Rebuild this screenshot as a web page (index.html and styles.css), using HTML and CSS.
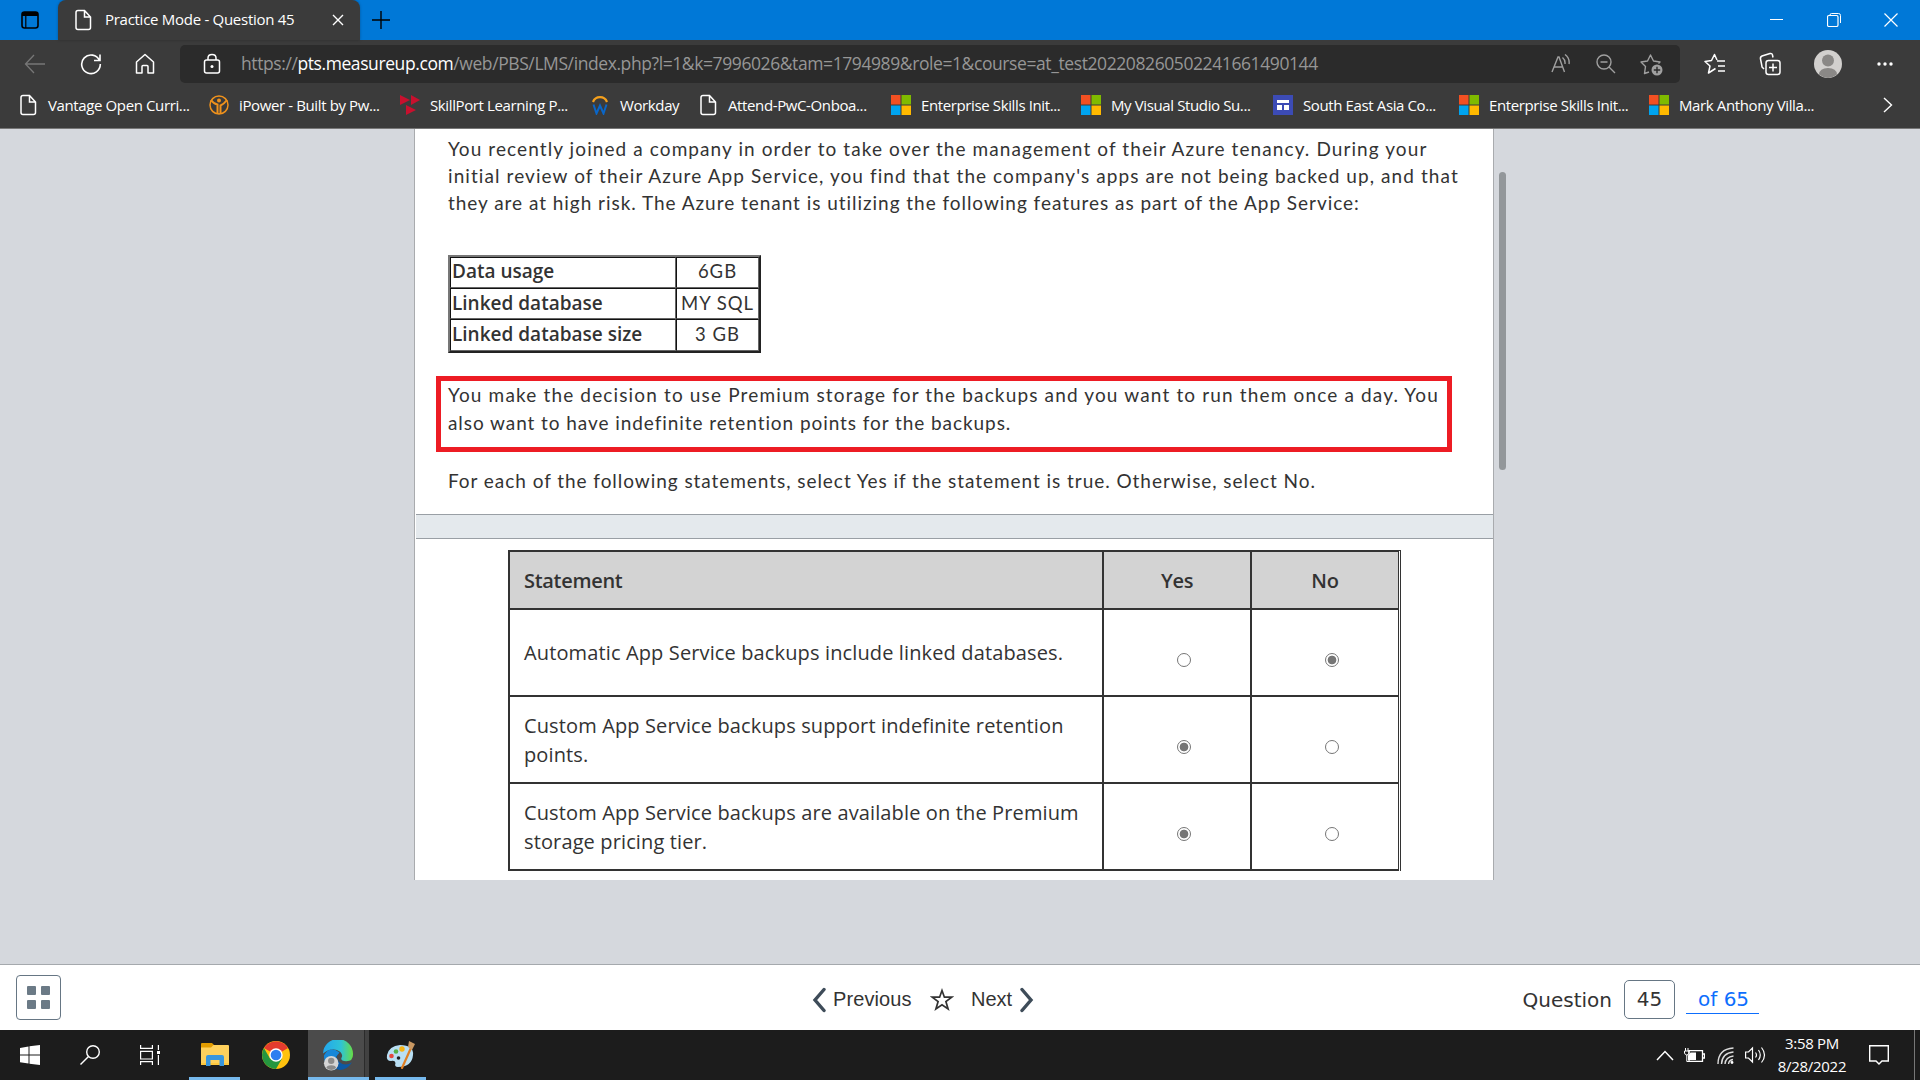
FILE: index.html
```html
<!DOCTYPE html>
<html lang="en">
<head>
<meta charset="utf-8">
<title>Practice Mode - Question 45</title>
<link rel="stylesheet" href="styles.css">
</head>
<body>
<svg class="defs" width="0" height="0">
  <symbol id="doc" viewBox="0 0 18 22"><path d="M4 1.5H10.5L16.5 8V18.5Q16.5 20.5 14.5 20.5H4Q2 20.5 2 18.5V3.5Q2 1.5 4 1.5ZM10.5 1.5V8H16.5" fill="none" stroke="#fff" stroke-width="1.5"/></symbol>
  <symbol id="ms" viewBox="0 0 20 20"><path fill="#f25022" d="M0 0H9.5V9.5H0z"/><path fill="#7fba00" d="M10.5 0H20V9.5H10.5z"/><path fill="#00a4ef" d="M0 10.5H9.5V20H0z"/><path fill="#ffb900" d="M10.5 10.5H20V20H10.5z"/></symbol>
</svg>
<header class="browser">
  <div class="titlebar">
    <div class="workspaces"><svg width="18" height="18" viewBox="0 0 18 18"><rect x="1" y="1" width="16" height="16" rx="2.5" fill="none" stroke="#000" stroke-width="1.6"/><path d="M1 3Q1 1 3 1H15Q17 1 17 3V5H1zM4.2 5H5.4V17H4.2z"/></svg></div>
    <div class="tab">
      <svg width="18" height="22"><use href="#doc"/></svg>
      <span class="tab-title">Practice Mode - Question 45</span>
      <svg class="tab-close" width="12" height="12" viewBox="0 0 12 12"><path d="M1 1L11 11M11 1L1 11" stroke="#fff" stroke-width="1.4"/></svg>
    </div>
    <svg class="newtab" width="18" height="18" viewBox="0 0 18 18"><path d="M9 0V18M0 9H18" stroke="#000" stroke-width="1.4"/></svg>
    <div class="window-controls">
      <svg width="14" height="14" viewBox="0 0 14 14"><path d="M0 6.5H13" stroke="#fff"/></svg>
      <svg width="14" height="14" viewBox="0 0 14 14"><path d="M3 3V2Q3 .5 4.500 .5H11.500Q13.500 .5 13.500 2.500V10" fill="none" stroke="#fff"/><rect x=".5" y="2.500" width="10.500" height="11" rx="1.500" fill="none" stroke="#fff" stroke-width="1.200"/></svg>
      <svg width="14" height="14" viewBox="0 0 14 14"><path d="M.5 .5L13.500 13.500M13.500 .5L.5 13.500" stroke="#fff" stroke-width="1.200"/></svg>
    </div>
  </div>
  <div class="toolbar">
    <div class="nav">
      <svg width="22" height="22" viewBox="0 0 22 22" fill="none" stroke="#777" stroke-width="1.3"><path d="M21 11H1.500M10 2L1.500 11L10 20"/></svg>
      <svg width="22" height="22" viewBox="0 0 22 22" fill="none" stroke="#fff" stroke-width="1.600"><path d="M19.500 7.500A9.300 9.300 0 1 0 20.300 11M20 1.500V7.500H14"/></svg>
      <svg width="20" height="22" viewBox="0 0 20 22" fill="none" stroke="#fff" stroke-width="1.500" stroke-linejoin="round"><path d="M1.500 9L10 1.500L18.500 9V20H13V13.500Q13 12.500 12 12.500H8Q7 12.500 7 13.500V20H1.500Z"/></svg>
    </div>
    <div class="address">
      <svg width="18" height="22" viewBox="0 0 18 22"><rect x="1.500" y="7" width="15" height="13" rx="2" fill="none" stroke="#fff" stroke-width="1.500"/><path d="M5 7V5Q5 1.500 9 1.500T13 5V7" fill="none" stroke="#fff" stroke-width="1.500"/><circle cx="9" cy="13.500" r="1.500" fill="#fff"/></svg>
      <span class="url">https://<b>pts.measureup.com</b>/web/PBS/LMS/index.php?l=1&amp;k=7996026&amp;tam=1794989&amp;role=1&amp;course=at_test202208260502241661490144</span>
      <div class="address-actions">
        <svg width="20" height="20" viewBox="0 0 20 20" fill="none" stroke="#a0a0a0" stroke-width="1.400"><path d="M1 18L7 3H8L13.500 18M3 13H11.500M11.500 3.500Q14.500 6 14 10M14 .5Q19 4.500 18 10"/></svg>
        <svg width="20" height="20" viewBox="0 0 20 20" fill="none" stroke="#a0a0a0" stroke-width="1.400"><circle cx="8" cy="8" r="7"/><path d="M13 13L19 19M4.500 8H11.500"/></svg>
        <svg width="23" height="23" viewBox="0 0 23 23" fill="none" stroke="#a0a0a0" stroke-width="1.400" stroke-linejoin="round"><path d="M9 19L4.500 20.500L5.500 13.500L1 9L7.500 8L10.500 2L13.500 8L20 9L18.500 10.500"/><circle cx="17" cy="17" r="5.500" fill="#a0a0a0" stroke="none"/><path d="M17 13.800V20.200M13.800 17H20.200" stroke="#2b2b2b"/></svg>
      </div>
    </div>
    <div class="actions">
      <svg width="22" height="22" viewBox="0 0 22 22" fill="none" stroke="#fff" stroke-width="1.500" stroke-linejoin="round"><path d="M13 8H21M14 13H21M14 18H21M11.500 15.500L4.500 20L6 13L1 8.500L7.500 7.500L10.500 1.500L13 7"/></svg>
      <svg width="22" height="24" viewBox="0 0 22 24" fill="none" stroke="#fff" stroke-width="1.500"><rect x="7" y="8.500" width="14" height="14" rx="2.500"/><path d="M14 11.500V19.500M10 15.500H18M5 17L3 15Q3 14 1.500 7Q1 5 3 4L11 1.500Q13 1 13.500 3L14 5.500"/></svg>
      <svg width="28" height="28" viewBox="0 0 28 28"><circle cx="14" cy="14" r="14" fill="#d2d0ce"/><circle cx="14" cy="10.500" r="6" fill="#8a8886"/><path d="M5 24.500Q5.500 18 14 18T23 24.500Q14 31.500 5 24.500" fill="#8a8886"/></svg>
      <svg width="18" height="6" viewBox="0 0 18 6" fill="#fff"><circle cx="3" cy="3" r="1.700"/><circle cx="9" cy="3" r="1.700"/><circle cx="15" cy="3" r="1.700"/></svg>
    </div>
  </div>
  <nav class="bookmarks">
    <a><svg class="page-icon" width="18" height="22"><use href="#doc"/></svg><span>Vantage Open Curri...</span></a>
    <a class="wide"><svg width="20" height="20" viewBox="0 0 20 20" fill="none" stroke="#f0921c"><circle cx="10" cy="10" r="9" stroke-width="1.500"/><path d="M2 5Q5 9 8.500 9.500V19M18 5Q15 9 11.500 10.500V19" stroke-width="2"/><circle cx="10" cy="5.500" r="2" fill="#f0921c" stroke="none"/></svg><span>iPower - Built by Pw...</span></a>
    <a><svg width="20" height="20" viewBox="0 0 20 20" fill="#c8102e"><path d="M0 0L10 5L0 10zM11 0L20 5L11 10zM6 10L16 15L6 20z"/></svg><span>SkillPort Learning P...</span></a>
    <a class="short"><svg width="20" height="20" viewBox="0 0 20 20" fill="none"><path d="M3 7A7.500 7.500 0 0 1 17 7" stroke="#f5a01c" stroke-width="2.200"/><path d="M3.500 9.500L6.500 18.500L10 10.500L13.500 18.500L16.500 9.500" stroke="#0a66c8" stroke-width="2"/></svg><span>Workday</span></a>
    <a class="wider"><svg class="page-icon" width="18" height="22"><use href="#doc"/></svg><span>Attend-PwC-Onboa...</span></a>
    <a><svg width="20" height="20"><use href="#ms"/></svg><span>Enterprise Skills Init...</span></a>
    <a class="wider"><svg width="20" height="20"><use href="#ms"/></svg><span>My Visual Studio Su...</span></a>
    <a class="narrow"><svg width="20" height="20" viewBox="0 0 20 20"><path fill="#3c4bb5" d="M0 0H20V20H0z"/><path fill="#fff" d="M4 5H16V8H4zM4 10H9V15H4zM11 10H16V15H11z"/></svg><span>South East Asia Co...</span></a>
    <a><svg width="20" height="20"><use href="#ms"/></svg><span>Enterprise Skills Init...</span></a>
    <a><svg width="20" height="20"><use href="#ms"/></svg><span>Mark Anthony Villa...</span></a>
    <svg class="overflow" width="10" height="16" viewBox="0 0 10 16"><path d="M1 1L8.500 8L1 15" fill="none" stroke="#fff" stroke-width="1.400"/></svg>
  </nav>
</header>
<main class="page">
  <section class="sheet">
    <div class="intro">
      <p class="prose">
        <span class="l1">You recently joined a company in order to take over the management of their Azure tenancy. During your</span>
        <span class="l2">initial review of their Azure App Service, you find that the company's apps are not being backed up, and that</span>
        <span class="l3">they are at high risk. The Azure tenant is utilizing the following features as part of the App Service:</span>
      </p>
      <table class="facts">
        <tr><th>Data usage</th><td>6GB</td></tr>
        <tr><th>Linked database</th><td>MY SQL</td></tr>
        <tr><th>Linked database size</th><td>3 GB</td></tr>
      </table>
      <p class="prose marked">
        <span class="l4">You make the decision to use Premium storage for the backups and you want to run them once a day. You</span>
        <span class="l5">also want to have indefinite retention points for the backups.</span>
      </p>
      <p class="prose"><span class="l6">For each of the following statements, select Yes if the statement is true. Otherwise, select No.</span></p>
    </div>
    <div class="splitter"></div>
    <div class="answers">
      <div class="row head"><div>Statement</div><div>Yes</div><div>No</div></div>
      <div class="row"><div>Automatic App Service backups include linked databases.</div><div><i class="radio"></i></div><div><i class="radio on"></i></div></div>
      <div class="row"><div>Custom App Service backups support indefinite retention<br>points.</div><div><i class="radio on"></i></div><div><i class="radio"></i></div></div>
      <div class="row"><div>Custom App Service backups are available on the Premium<br>storage pricing tier.</div><div><i class="radio on"></i></div><div><i class="radio"></i></div></div>
    </div>
  </section>
  <div class="scrollbar"></div>
</main>
<footer class="pager">
  <div class="grid-btn"><i></i><i></i><i></i><i></i></div>
  <div class="steps">
    <svg width="14" height="26" viewBox="0 0 14 26"><path d="M12 2.500L3 13L12 23.500" fill="none" stroke="#3e4c59" stroke-width="3.400" stroke-linecap="round"/></svg>
    <span class="prev">Previous</span>
    <svg class="star" width="24" height="24" viewBox="0 0 24 24"><path d="M12 2.500L14.400 9.200H21.800L15.900 13.600L18.100 21L12 16.700L5.900 21L8.100 13.600L2.200 9.200H9.600Z" fill="none" stroke="#333" stroke-width="1.700"/></svg>
    <span class="next">Next</span>
    <svg width="14" height="26" viewBox="0 0 14 26"><path d="M2 2.500L11 13L2 23.500" fill="none" stroke="#3e4c59" stroke-width="3.400" stroke-linecap="round"/></svg>
  </div>
  <div class="counter"><span class="q">Question</span><span class="num">45</span><a class="total">of 65</a></div>
</footer>
<div class="taskbar">
  <div class="task w60"><svg width="20" height="20" viewBox="0 0 20 20" fill="#fff"><path d="M0 3L8.500 1.500V9.500H0zM9.500 1.300L20 0V9.500H9.500zM0 10.500H8.500V18.500L0 17.300zM9.500 10.500H20V20L9.500 18.700z"/></svg></div>
  <div class="task w60"><svg width="20" height="20" viewBox="0 0 20 20" fill="none" stroke="#fff" stroke-width="1.400"><circle cx="13" cy="7" r="6.300"/><path d="M8.500 11.500L.5 19.500"/></svg></div>
  <div class="task w60"><svg width="20" height="20" viewBox="0 0 20 20" fill="none" stroke="#fff" stroke-width="1.200"><path d="M.6 0V3.400H12.400V0M.6 6.400H12.400V14H.6zM.6 20V16.600H12.400V20M18.400 0V5M18.400 10V20"/><path d="M17 6H20V9H17z" fill="#fff" stroke="none"/></svg></div>
  <div class="task under"><svg width="28" height="24" viewBox="0 0 28 24"><path fill="#e29c00" d="M0 1Q0 0 1 0H11L13.500 2.500L11 5H0z"/><path fill="#ffd15c" d="M0 4.500H10L12.500 2H27Q28 2 28 3V22H0z"/><path fill="#ffc83d" d="M0 20H28V22H0z"/><path fill="#3a96dd" d="M5 14Q5 12 7 12H21Q23 12 23 14V23H18.500V17H9.500V23H5z"/></svg></div>
  <div class="task chrome"><svg width="28" height="28" viewBox="0 0 28 28"><circle cx="14" cy="14" r="14" fill="#ffc20e"/><path fill="#e33b2e" d="M14 14L2 7A14 14 0 0 1 26.100 7z"/><path fill="#24963f" d="M1.900 7A14 14 0 0 0 14 28L20 17.500L14 14L8 17.500z"/><circle cx="14" cy="14" r="6.700" fill="#fff"/><circle cx="14" cy="14" r="5.300" fill="#2d7ff0"/></svg></div>
  <div class="task active"><svg width="31" height="31" viewBox="0 0 32 32"><defs><linearGradient id="e1"><stop stop-color="#22a6ee"/><stop offset=".6" stop-color="#2fc3d5"/><stop offset="1" stop-color="#67dd45"/></linearGradient></defs><path fill="#0c59a4" d="M7 10Q2 26 17 31Q25 31 30 23Q22 28 16 22Q12 16 17 13z"/><path fill="#1687d9" d="M1 16Q1 29 13 31Q8 22 17 13Q7 5 1 16"/><path fill="url(#e1)" d="M0 14A15 15 0 0 1 31 15Q31 22 24 22Q18 22 19 18.500Q21 16 18 12.500Q10 6 0 14"/><circle cx="8.500" cy="24" r="7.500" fill="#d5d5d5"/><circle cx="8.500" cy="21.500" r="3.300" fill="#8b8b8b"/><path d="M3.500 29Q3.500 26 8.500 26T13.500 29Q8.500 33 3.500 29" fill="#8b8b8b"/></svg></div>
  <div class="task paint"><svg width="30" height="28" viewBox="0 0 30 28"><path fill="#b9dff4" d="M14 4Q28 4 27 14Q26 26 12 26Q8 26 9.500 22Q9 19 5 20Q0 20 1 14Q3 5 14 4"/><circle cx="5.500" cy="15" r="2.300" fill="#e5483e"/><circle cx="10" cy="10.500" r="2.300" fill="#57b147"/><circle cx="16" cy="8" r="2.700" fill="#f8b414"/><circle cx="12.500" cy="17" r="1.800" fill="#222"/><path d="M24.500 8L16 27" stroke="#df7f25" stroke-width="2.200" stroke-linecap="round"/><path d="M22 6L23 0L29 3L26 9z" fill="#c99862"/></svg></div>
  <div class="tray">
    <svg width="18" height="11" viewBox="0 0 18 11"><path d="M1 10L9 1.500L17 10" fill="none" stroke="#fff" stroke-width="1.500"/></svg>
    <svg class="battery" width="21" height="15" viewBox="0 0 21 15"><path d="M5 2.700H18.500V13.300H5zM19 6H20.500V10H19" fill="none" stroke="#fff" stroke-width="1.300"/><path d="M6.500 4.500H12V12H4V8z" fill="#fff"/><path d="M1.500 0V3M4 0V3M.5 3H5V5Q4.500 7 2.800 7T.5 5zM2.800 7V13.500H5" fill="none" stroke="#fff"/></svg>
    <svg class="wifi" width="17" height="17" viewBox="0 0 17 17" fill="none" stroke="#ddd" stroke-width="1.400"><path d="M1 17Q1 2 16.500 1M4.500 17Q5 6 16.500 5M8 17Q8.500 10 16.500 9"/><path d="M11.500 17Q12 13 16 12.500" /><circle cx="15" cy="15.500" r="1.400" fill="#fff" stroke="none"/></svg>
    <svg class="vol" width="21" height="18" viewBox="0 0 21 18" fill="none" stroke="#fff" stroke-width="1.200"><path d="M.6 6H3.500L7.500 2V16L3.500 12H.6zM10.500 6.500Q12.500 9 10.500 11.500M13.500 4Q17 9 13.500 14M16.500 1.500Q22.500 9 16.500 16.500"/></svg>
    <div class="clock"><span>3:58 PM</span><span>8/28/2022</span></div>
    <svg class="notif" width="20" height="20" viewBox="0 0 20 20"><path d="M.7 .7H19.300V16H13L10 19L7 16H.7z" fill="none" stroke="#fff" stroke-width="1.400"/></svg>
    <i class="peek"></i>
  </div>
</div>
</body>
</html>
```
FILE: styles.css
```css
* { box-sizing: border-box; }
body { margin: 0; width: 1920px; height: 1080px; overflow: hidden; display: flex; flex-direction: column; font-family: "Open Sans", "Noto Sans", sans-serif; color: #333; background: #d5d8dd; }
svg { display: block; flex: none; }
span { white-space: nowrap; }
.defs { position: absolute; }

.browser { height: 129px; background: #3b3b3b; border-bottom: 1px solid #777; color: #fff; flex: none; }
.titlebar { height: 40px; background: #0078d7; display: flex; align-items: center; }
.workspaces { width: 58px; padding-left: 21px; }
.tab { width: 302px; height: 40px; background: #3b3b3b; border-radius: 8px 8px 0 0; display: flex; align-items: center; padding-left: 16px; box-shadow: 0 0 3px #0004; }
.tab-title { width: 199px; margin: -2px 28px 0 13px; font-size: 15px; letter-spacing: -0.28px; }
.newtab { margin-left: 12px; }
.window-controls { margin-left: auto; padding-right: 22px; display: flex; gap: 43px; }
.toolbar { height: 49px; padding-bottom: 1px; display: flex; align-items: center; }
.nav { width: 180px; padding-left: 24px; display: flex; gap: 33.5px; }
.address { width: 1500px; height: 38px; background: #2b2b2b; border-radius: 5px; display: flex; align-items: center; padding: 0 17px 0 23px; }
.url { margin: -2px 0 0 20px; font-size: 17.5px; color: #969696; letter-spacing: -0.41px; }
.url b { color: #fff; font-weight: 400; }
.address-actions { margin-left: auto; display: flex; align-items: center; gap: 24.5px; }
.actions { flex: 1; display: flex; align-items: center; padding-left: 24px; }
.actions svg:nth-child(2) { margin-left: 33px; }
.actions svg:nth-child(3) { margin-left: 33px; }
.actions svg:nth-child(4) { margin-left: 34px; }
.bookmarks { height: 34px; display: flex; align-items: center; padding: 0 0 2px 19px; font-size: 15px; letter-spacing: -0.38px; }
.bookmarks a { width: 190px; display: flex; align-items: center; gap: 10px; flex: none; }
.bookmarks .wide { width: 191px; }
.bookmarks .wider { width: 192px; }
.bookmarks .narrow { width: 186px; }
.bookmarks .short { width: 109px; }
.page-icon { margin-right: 1px; }
.bookmarks .overflow { margin-left: 44px; }

.page { flex: 1; display: flex; align-items: flex-start; padding-left: 414px; }
.sheet { width: 1080px; height: 751px; background: #fff; border: 1px solid #a9abae; border-width: 0 1px; }
.intro { height: 385px; padding: 6px 0 0 33px; }
.prose { margin: 0; font-family: Lato, sans-serif; font-size: 19px; line-height: 27.2px; }
.prose span { display: block; }
.l1 { letter-spacing: 1.09px; }
.l2 { letter-spacing: 1.08px; }
.l3 { letter-spacing: 0.96px; }
.l4 { letter-spacing: 1.15px; }
.l5 { letter-spacing: 0.93px; }
.l6 { letter-spacing: 0.95px; }
.facts { width: 313px; height: 98px; margin: 38px 0 28px; border: 2px outset #777; border-collapse: separate; border-spacing: 0; font-size: 19px; line-height: 26px; }
.facts th, .facts td { border: 1px inset #666; padding: 0 1px 2px; }
.facts th { text-align: left; width: 226px; font-weight: 600; }
.facts td { text-align: center; font-family: Lato, sans-serif; font-size: 18.5px; letter-spacing: 1px; }
.marked { width: 1016px; height: 76px; border: 5px solid #ed1c24; margin: -5px 0 15px -12px; padding: 0 0 0 7px; line-height: 28px; }
.splitter { height: 25px; margin-left: 1px; background: #e4e9ed; border: 1px solid #999fa5; border-width: 1px 0; }
.answers { width: 893px; margin: 11px 0 0 93px; border: 2px solid #333; border-right: 3px double #333; border-bottom: 0; font-size: 20px; line-height: 29px; letter-spacing: 0.13px; }
.row { display: grid; grid-template-columns: 594px 148px 146px; height: 87px; border-bottom: 2px solid #333; }
.row > div { display: flex; align-items: center; justify-content: center; border-right: 2px solid #333; }
.row > div:first-child { justify-content: flex-start; padding-left: 14px; }
.row > div:last-child { border-right: 0; }
.head { height: 58px; background: #d3d3d3; font-weight: 600; letter-spacing: -0.3px; }
.radio { width: 14px; height: 14px; margin: 14px 0 0 14px; border: 1px solid #767676; border-radius: 50%; }
.radio.on { background: radial-gradient(circle, #767676 4px, #fff 4.7px); }
.scrollbar { width: 7px; height: 298px; margin: 43px 0 0 5px; border-radius: 4px; background: #93979a; }

.pager { height: 66px; background: #fff; border-top: 1px solid #a5a9ad; display: flex; align-items: center; padding: 0 161px 0 16px; }
.grid-btn { width: 45px; height: 45px; border: 1px solid #667684; border-radius: 4px; padding: 10px; display: grid; grid-template-columns: 9px 9px; grid-template-rows: 9px 9px; gap: 4.500px; }
.grid-btn i { background: #6b7a86; border-radius: 1px; }
.steps { display: flex; align-items: center; margin: 4px 0 0 751px; font: 20px "Liberation Sans", sans-serif; }
.prev { width: 96px; padding-left: 7px; letter-spacing: 0.1px; }
.star { margin-left: 8px; }
.next { width: 49px; margin-left: 17px; }
.counter { display: flex; align-items: center; margin: 4px 0 0 auto; font: 20px "DejaVu Sans", sans-serif; }
.num { width: 51px; height: 39px; margin: 0 11px 0 12px; border: 1px solid #667684; border-radius: 5px; text-align: center; line-height: 37px; }
.total { width: 73px; color: #0d6efd; border-bottom: 1px solid #0d6efd; padding-left: 12px; line-height: 27px; white-space: nowrap; }

.taskbar { height: 50px; flex: none; background: #1c1c1c; display: flex; color: #fff; }
.task { height: 50px; display: flex; align-items: center; justify-content: center; border-bottom: 3px solid transparent; padding-top: 3px; }
.w60 { width: 60px; }
.under { width: 51px; margin: 0 9px; border-color: #76b9ed; }
.chrome { width: 54px; }
.active { width: 61px; margin-left: 5px; background: linear-gradient(90deg, #4b4b4b 56px, #2b2b2b 56px, #2b2b2b 57px, #414141 57px); border-color: #76b9ed; padding-right: 1px; }
.paint { width: 51px; margin-left: 6px; border-color: #76b9ed; }
.tray { margin-left: auto; display: flex; align-items: center; }
.battery { margin-left: 10px; }
.wifi { margin-left: 12px; }
.vol { margin-left: 11px; }
.clock { width: 92px; display: flex; flex-direction: column; align-items: center; font-size: 15px; line-height: 23px; letter-spacing: -0.3px; }
.notif { margin-left: 11px; }
.peek { width: 1px; height: 50px; margin: 0 5px 0 25px; background: #777; }
```
